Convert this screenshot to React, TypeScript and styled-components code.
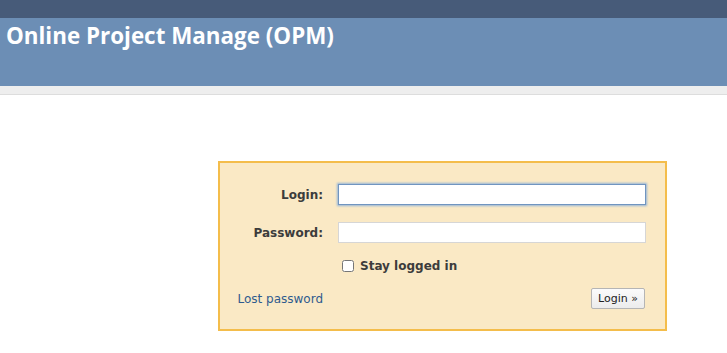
import * as React from 'react';
import styled, {createGlobalStyle} from 'styled-components';

const GlobalStyle = createGlobalStyle`
  html, body {
    margin: 0;
    padding: 0;
    background: #fff;
  }
  body {
    font-family: "DejaVu Sans", Verdana, sans-serif;
    font-size: 12px;
    color: #333;
  }
`;

const TopMenu = styled.div`
  height: 18px;
  background: #475b79;
`;

const Header = styled.header`
  height: 68px;
  background: #6c8eb5;
  color: #fff;
  h1 {
    margin: 0;
    padding: 3px 0 0 6px;
    font-family: "Open Sans", "Noto Sans", sans-serif;
    font-size: 22.4px;
    font-weight: bold;
    line-height: 30px;
  }
`;

const MenuStrip = styled.div`
  height: 8px;
  background: #eeeeee;
  border-bottom: 1px solid #dddddd;
`;

const Content = styled.main`
  padding: 66px 0 0 218px;
`;

const LoginBox = styled.form`
  width: 445px;
  background: #fae9c5;
  border: 2px solid #f4bd4b;
  padding: 21px 0 20px;
  display: grid;
  grid-template-columns: 103px 308px;
  column-gap: 15px;
  row-gap: 12px;
`;

const Label = styled.label`
  display: flex;
  align-items: center;
  justify-content: flex-end;
  font-weight: bold;
  color: #3c3c3c;
  height: 21px;
`;

const TextInput = styled.input<{ $focused?: boolean }>`
  box-sizing: border-box;
  width: 308px;
  height: 21px;
  margin: 0;
  padding: 1px 3px;
  font: 12px "DejaVu Sans", Verdana, sans-serif;
  background: #fff;
  border: 1px solid ${p => (p.$focused ? '#7095c0' : '#d6d6d6')};
  box-shadow: ${p => (p.$focused ? '0 0 2px 1px #94b4d8' : 'none')};
  outline: none;
`;

const PasswordRow = styled.div`
  display: contents;
  > * {
    margin-top: 5px;
  }
`;

const CheckCell = styled.div`
  display: flex;
  align-items: center;
  height: 21px;
  font-weight: bold;
  color: #3c3c3c;
  input {
    width: 12px;
    height: 12px;
    margin: 0 6px 0 4px;
  }
`;

const LinkCell = styled.div`
  display: flex;
  align-items: center;
  justify-content: flex-end;
  height: 21px;
  a {
    color: #2f5b8e;
    text-decoration: none;
  }
`;

const ButtonCell = styled.div`
  display: flex;
  justify-content: flex-end;
  padding-right: 1px;
`;

const SubmitButton = styled.button`
  box-sizing: border-box;
  height: 21px;
  padding: 0 6px;
  font: 11px "DejaVu Sans", Tahoma, sans-serif;
  color: #222;
  background: linear-gradient(#fbfbfb, #ececec);
  border: 1px solid #b5b5b5;
  border-radius: 2px;
`;

export default function App() {
  return (
    <>
      <GlobalStyle/>
      <TopMenu/>
      <Header>
        <h1>Online Project Manage (OPM)</h1>
      </Header>
      <MenuStrip/>
      <Content>
        <LoginBox onSubmit={e => e.preventDefault()}>
          <Label htmlFor="username">Login:</Label>
          <TextInput id="username" type="text" $focused/>
          <PasswordRow>
            <Label htmlFor="password">Password:</Label>
            <TextInput id="password" type="password"/>
          </PasswordRow>
          <div/>
          <CheckCell>
            <input type="checkbox" id="autologin"/>
            <label htmlFor="autologin">Stay logged in</label>
          </CheckCell>
          <LinkCell>
            <a href="#">Lost password</a>
          </LinkCell>
          <ButtonCell>
            <SubmitButton type="submit">Login »</SubmitButton>
          </ButtonCell>
        </LoginBox>
      </Content>
    </>
  );
}
